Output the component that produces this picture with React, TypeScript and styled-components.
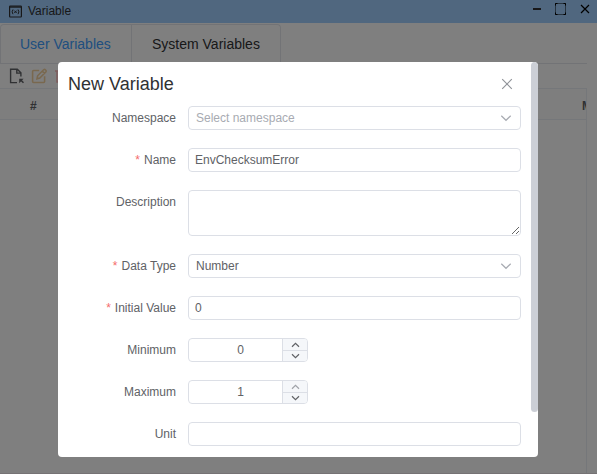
import React from "react";
import styled, { createGlobalStyle } from "styled-components";

const Global = createGlobalStyle`
  * { box-sizing: border-box; }
  html, body { margin: 0; height: 100%; overflow: hidden; }
  body { font-family: "Liberation Sans", Arial, sans-serif; background: #fff; }
  #root { height: 100%; }
`;

const Window = styled.div`
  height: 474px;
  display: flex;
  flex-direction: column;
  position: relative;
  overflow: hidden;
`;

const TitleBar = styled.header`
  height: 23px;
  flex: none;
  display: flex;
  align-items: center;
  padding: 0 6px 0 9px;
  background: #a0cfff;
  color: #303133;
  font-size: 12px;
`;

const TitleText = styled.span`
  margin-left: 6px;
  flex: 1;
  line-height: 22px;
  height: 23px;
`;

const Controls = styled.div`
  display: flex;
  align-items: center;
  gap: 12px;
  height: 18px;
  margin-bottom: 5px;
`;

const Tabs = styled.nav`
  height: 40px;
  flex: none;
  display: flex;
  width: 587px;
  margin-top: 1px;
  border-bottom: 1px solid #e4e7ed;
`;

const TabGroup = styled.div`
  display: flex;
  width: 281px;
  border: 1px solid #e4e7ed;
  border-bottom: 0;
  border-radius: 4px 4px 0 0;
`;

const Tab = styled.div<{ $active?: boolean }>`
  width: ${(p) => (p.$active ? 130 : 149)}px;
  padding-left: ${(p) => (p.$active ? 19 : 20)}px;
  border-left: ${(p) => (p.$active ? "0" : "1px solid #e4e7ed")};
  color: ${(p) => (p.$active ? "#409eff" : "#303133")};
  font-size: 14px;
  line-height: 39px;
  white-space: nowrap;
`;

const Toolbar = styled.div`
  height: 24px;
  flex: none;
  display: flex;
  align-items: center;
  padding: 0 0 0 8px;
  gap: 6px;
`;

const Table = styled.div`
  width: 587px;
  flex: 1;
  border-top: 1px solid #ebeef5;
  border-right: 1px solid #ebeef5;
`;

const TableHead = styled.div`
  display: flex;
  justify-content: space-between;
  height: 31px;
  padding: 3px 0 0 30px;
  border-bottom: 1px solid #ebeef5;
  background: #fcfcfd;
  font-size: 12px;
  font-weight: bold;
  line-height: 29px;
  color: #606266;
`;

const CutCell = styled.span`
  width: 4px;
  overflow: hidden;
`;

const BottomEdge = styled.div`
  height: 1px;
  flex: none;
  background: #ebe4e8;
`;

const Mask = styled.div`
  position: absolute;
  inset: 0;
  background: rgba(0, 0, 0, 0.5);
`;

const Dialog = styled.section`
  position: absolute;
  left: 58px;
  top: 62px;
  width: 480px;
  height: 395px;
  background: #fff;
  border-radius: 4px;
  overflow: hidden;
  display: flex;
`;

const DialogContent = styled.div`
  width: 473px;
  padding: 0 10px;
`;

const ScrollThumb = styled.div`
  width: 7px;
  height: 350px;
  border-radius: 4px;
  background: #cccfd6;
`;

const DialogHead = styled.div`
  height: 44px;
  display: flex;
  justify-content: space-between;
  padding-right: 7px;
  align-items: center;
  color: #303133;
`;

const Heading = styled.h1`
  margin: 0;
  font-size: 18px;
  font-weight: normal;
  line-height: 44px;
`;

const Form = styled.form`
  display: flex;
  flex-direction: column;
  gap: 18px;
`;

const Row = styled.div`
  display: flex;
  color: #606266;
  font-size: 12px;
`;

const Label = styled.label`
  width: 120px;
  flex: none;
  padding-right: 12px;
  text-align: right;
  line-height: 24px;
`;

const Star = styled.span`
  color: #f56c6c;
  margin-right: 4px;
`;

const Field = styled.div<{ $placeholder?: boolean; $select?: boolean }>`
  width: 333px;
  height: 24px;
  display: flex;
  align-items: center;
  justify-content: space-between;
  border: 1px solid #dcdfe6;
  border-radius: 4px;
  padding: 0 ${(p) => (p.$select ? 8 : 7)}px 0 ${(p) => (p.$select ? 7 : 6)}px;
  color: ${(p) => (p.$placeholder ? "#a8abb2" : "#606266")};
  line-height: 22px;
`;

const TextArea = styled.textarea`
  width: 333px;
  height: 46px;
  display: block;
  border: 1px solid #dcdfe6;
  border-radius: 4px;
  resize: vertical;
  outline: none;
`;

const NumberBox = styled.div`
  width: 120px;
  height: 24px;
  display: flex;
  border: 1px solid #dcdfe6;
  border-radius: 4px;
  overflow: hidden;
`;

const NumberValue = styled.span`
  width: 93px;
  padding-left: 10px;
  text-align: center;
  line-height: 22px;
`;

const Stepper = styled.div`
  width: 25px;
  border-left: 1px solid #dcdfe6;
  background: #f5f7fa;
`;

const Step = styled.div<{ $off?: boolean }>`
  height: 11px;
  display: flex;
  align-items: center;
  justify-content: center;
  color: ${(p) => (p.$off ? "#a0a3a9" : "#606266")};
  & + & { border-top: 1px solid #dcdfe6; }
`;

const Svg = styled.svg`
  display: block;
  flex: none;
  fill: none;
  stroke: currentColor;
`;

const SelectArrow = styled(Svg)`
  color: #a8abb2;
`;

const Chevron = () => (
  <SelectArrow width="12" height="12" viewBox="0 0 12 12"><path d="M1.3 3.7 6 8.3l4.7-4.6" strokeWidth="1.2" /></SelectArrow>
);

const StepIcon = ({ up }: { up?: boolean }) => (
  <Svg width="9" height="7" viewBox="0 0 9 7"><path d={up ? "M1 5.7 4.5 2.3 8 5.7" : "M1 1.3 4.5 4.7 8 1.3"} strokeWidth="1.2" /></Svg>
);

const VariableIcon = () => (
  <Svg width="13" height="13" viewBox="0 0 13 13">
    <rect x=".6" y="1" width="11.8" height="11" rx=".7" strokeWidth="1.2" />
    <path d="M1 2h11" strokeWidth="1.4" />
    <path d="M4 4.5Q2.2 6.8 4 9.2M9 4.5q1.8 2.3 0 4.7M5.3 5.6l2.4 2.4M7.7 5.6 5.3 8" />
  </Svg>
);

const WindowControls = () => (
  <Controls>
    <Svg width="10" height="12" viewBox="0 0 10 12"><path d="M1 6h8" stroke="#303133" strokeWidth="2" /></Svg>
    <Svg width="13" height="12" viewBox="0 0 13 12" color="#000">
      <rect x="1.5" y=".5" width="10" height="11" strokeWidth="1" strokeDasharray="1 1" />
      <path d="M1.5 2.5v-2H3.5M9.5.5h2v2M1.5 9.5v2h2M9.5 11.5h2v-2" />
    </Svg>
    <Svg width="12" height="12" viewBox="0 0 12 12" color="#000"><path d="m2 2 8 8M10 2l-8 8" strokeWidth="1.2" /></Svg>
  </Controls>
);

const NewFileIcon = () => (
  <Svg width="17" height="16" viewBox="0 0 17 16" color="#606266">
    <path d="M9 14.6H2.6V1.2h6.7l3.6 3.6v3.8M8.8 1.2v3.9h4" strokeWidth="1.4" />
    <path d="m15.5 14.8-3-3" strokeWidth="1.5" />
    <path d="M11.2 10.8h4.4l-4.4 4.4Z" fill="currentColor" stroke="none" />
  </Svg>
);

const EditIcon = () => (
  <Svg width="17" height="17" viewBox="0 0 17 17" color="#f3d19e">
    <path d="M8.2 2.5H2.6q-1 0-1 1v10q0 1 1 1h10q1 0 1-1V8.2M6 10.8l.6-3 6-6q1-.8 2 .2t.2 2l-6 6ZM11.3 3.1l2.3 2.3" strokeWidth="1.6" />
  </Svg>
);

const DeleteIcon = () => (
  <Svg width="16" height="16" viewBox="0 0 16 16" color="#fab6b6">
    <path d="M1 3h14M3 3v11h10V3M6 3V1h4v2M6 6v5M10 6v5" strokeWidth="1.5" />
  </Svg>
);

const CloseIcon = () => (
  <Svg width="14" height="14" viewBox="0 0 14 14" color="#909399"><path d="m2.2 2.2 9.6 9.6M11.8 2.2l-9.6 9.6" strokeWidth="1.15" /></Svg>
);

function FormRow({ label, required, children }: { label: string; required?: boolean; children?: React.ReactNode }) {
  return (
    <Row>
      <Label>{required && <Star>*</Star>}{label}</Label>
      {children}
    </Row>
  );
}

function NumberInput({ value, atMax }: { value: string; atMax?: boolean }) {
  return (
    <NumberBox>
      <NumberValue>{value}</NumberValue>
      <Stepper>
        <Step $off={atMax}><StepIcon up /></Step>
        <Step><StepIcon /></Step>
      </Stepper>
    </NumberBox>
  );
}

export default function App() {
  return (
    <>
      <Global />
      <Window>
        <TitleBar>
          <VariableIcon />
          <TitleText>Variable</TitleText>
          <WindowControls />
        </TitleBar>
        <Tabs>
          <TabGroup>
            <Tab $active>User Variables</Tab>
            <Tab>System Variables</Tab>
          </TabGroup>
        </Tabs>
        <Toolbar>
          <NewFileIcon />
          <EditIcon />
          <DeleteIcon />
        </Toolbar>
        <Table>
          <TableHead><span>#</span><CutCell>M</CutCell></TableHead>
        </Table>
        <BottomEdge />
        <Mask />
        <Dialog>
          <DialogContent>
            <DialogHead><Heading>New Variable</Heading><CloseIcon /></DialogHead>
            <Form>
              <FormRow label="Namespace"><Field $select $placeholder>Select namespace<Chevron /></Field></FormRow>
              <FormRow label="Name" required><Field>EnvChecksumError</Field></FormRow>
              <FormRow label="Description"><TextArea /></FormRow>
              <FormRow label="Data Type" required><Field $select>Number<Chevron /></Field></FormRow>
              <FormRow label="Initial Value" required><Field>0</Field></FormRow>
              <FormRow label="Minimum"><NumberInput value="0" /></FormRow>
              <FormRow label="Maximum"><NumberInput value="1" atMax /></FormRow>
              <FormRow label="Unit"><Field /></FormRow>
            </Form>
          </DialogContent>
          <ScrollThumb />
        </Dialog>
      </Window>
    </>
  );
}
